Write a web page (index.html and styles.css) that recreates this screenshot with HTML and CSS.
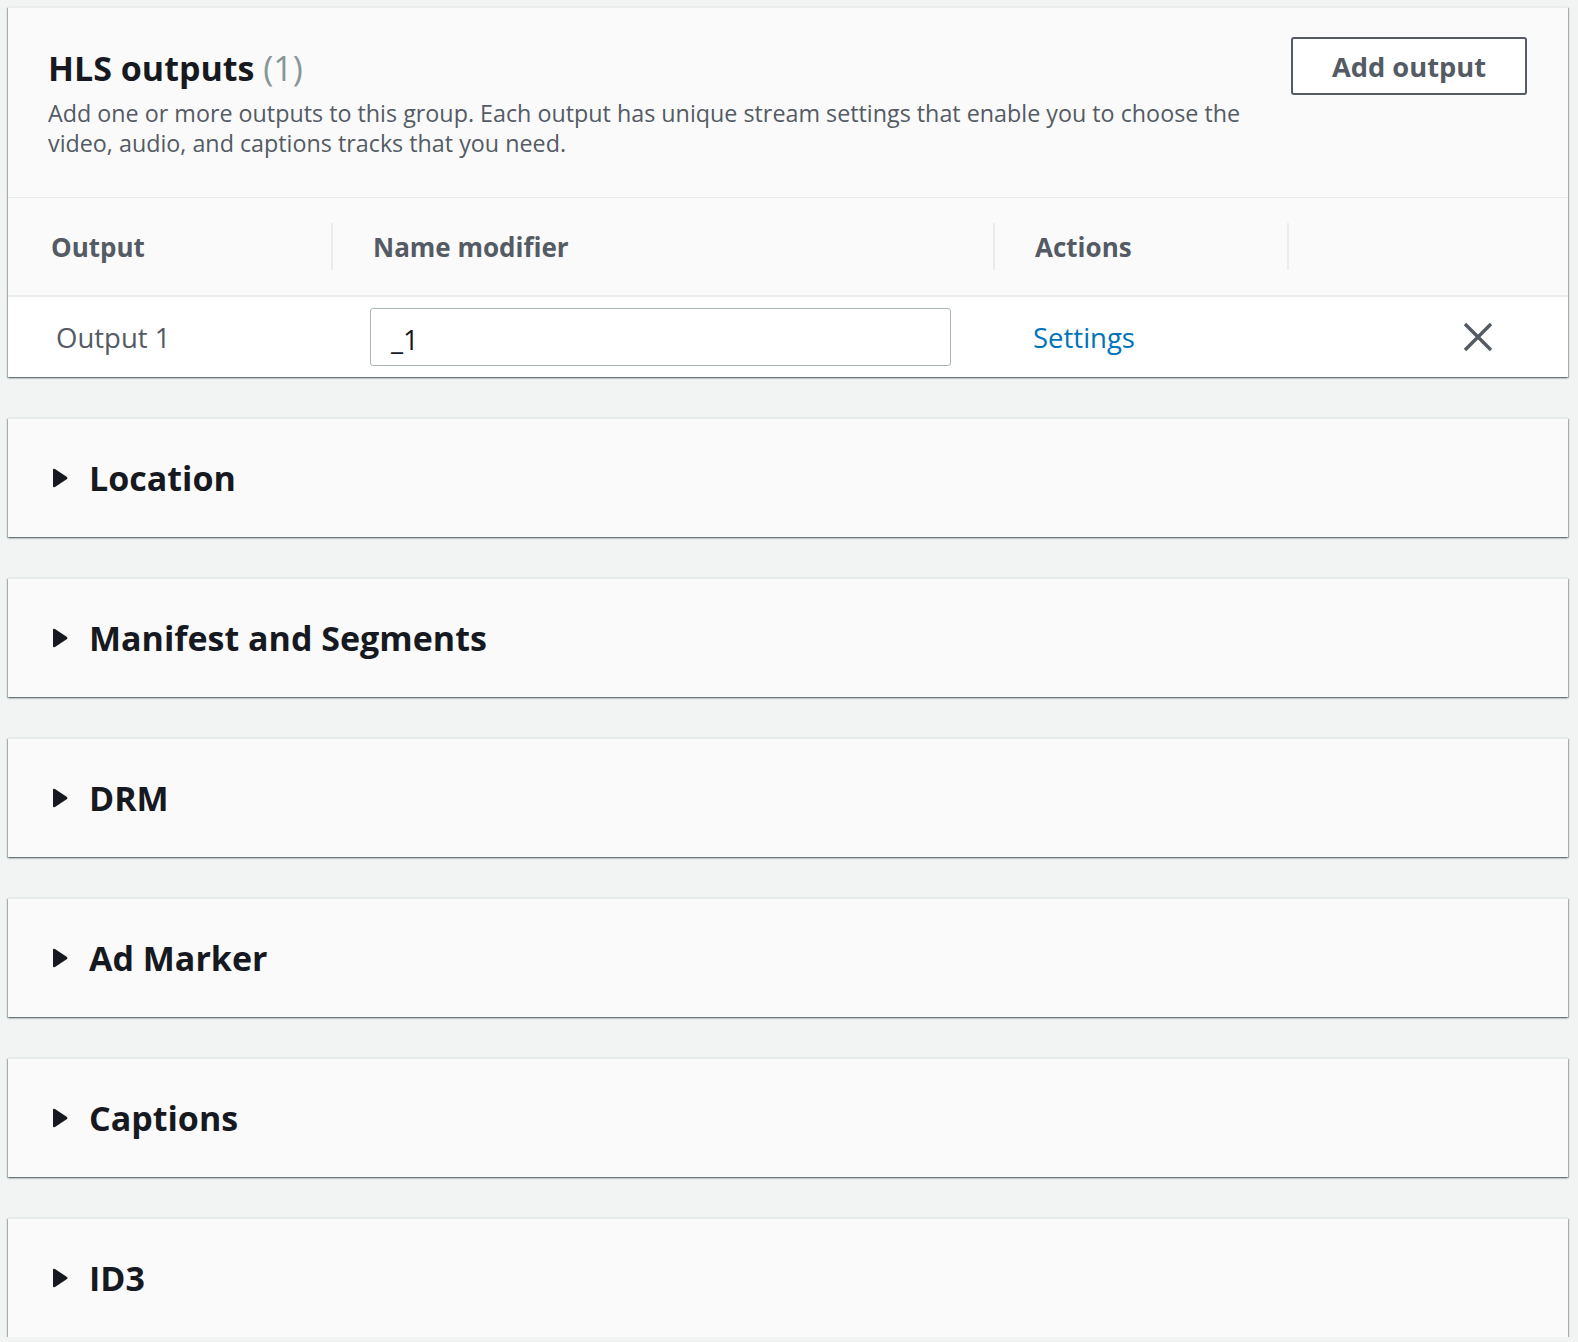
FILE: index.html
```html
<!DOCTYPE html>
<html lang="en">
<head>
<meta charset="utf-8">
<title>HLS outputs</title>
<link rel="stylesheet" href="styles.css">
</head>
<body>
<div class="page">
  <section class="card outputs">
    <div class="outputs-head">
      <div class="head-text">
        <h2 class="title">HLS outputs <span class="count">(1)</span></h2>
        <p class="desc">Add one or more outputs to this group. Each output has unique stream settings that enable you to choose the video, audio, and captions tracks that you need.</p>
      </div>
      <button class="btn">Add output</button>
    </div>
    <div class="table">
      <div class="row thead">
        <div class="cell c1"><span>Output</span></div>
        <div class="cell c2"><span>Name modifier</span></div>
        <div class="cell c3"><span>Actions</span></div>
        <div class="cell c4"></div>
      </div>
      <div class="row tbody">
        <div class="cell c1 name">Output 1</div>
        <div class="cell c2"><div class="input">_1</div></div>
        <div class="cell c3"><a class="link" href="#">Settings</a></div>
        <div class="cell c4 remove">
          <svg width="30" height="30" viewBox="0 0 30 30" aria-hidden="true"><path d="M2 2 L28 28 M28 2 L2 28" stroke="#545b64" stroke-width="3.4" fill="none"/></svg>
        </div>
      </div>
    </div>
  </section>

  <section class="card exp"><svg class="caret" width="16" height="20" viewBox="0 0 16 20"><path d="M1 2 Q1 0 3 1 L15 9 Q16 10 15 11 L3 19 Q1 20 1 18 Z" fill="#16191f"/></svg><h3 class="exp-title">Location</h3></section>
  <section class="card exp"><svg class="caret" width="16" height="20" viewBox="0 0 16 20"><path d="M1 2 Q1 0 3 1 L15 9 Q16 10 15 11 L3 19 Q1 20 1 18 Z" fill="#16191f"/></svg><h3 class="exp-title">Manifest and Segments</h3></section>
  <section class="card exp"><svg class="caret" width="16" height="20" viewBox="0 0 16 20"><path d="M1 2 Q1 0 3 1 L15 9 Q16 10 15 11 L3 19 Q1 20 1 18 Z" fill="#16191f"/></svg><h3 class="exp-title">DRM</h3></section>
  <section class="card exp"><svg class="caret" width="16" height="20" viewBox="0 0 16 20"><path d="M1 2 Q1 0 3 1 L15 9 Q16 10 15 11 L3 19 Q1 20 1 18 Z" fill="#16191f"/></svg><h3 class="exp-title">Ad Marker</h3></section>
  <section class="card exp"><svg class="caret" width="16" height="20" viewBox="0 0 16 20"><path d="M1 2 Q1 0 3 1 L15 9 Q16 10 15 11 L3 19 Q1 20 1 18 Z" fill="#16191f"/></svg><h3 class="exp-title">Captions</h3></section>
  <section class="card exp"><svg class="caret" width="16" height="20" viewBox="0 0 16 20"><path d="M1 2 Q1 0 3 1 L15 9 Q16 10 15 11 L3 19 Q1 20 1 18 Z" fill="#16191f"/></svg><h3 class="exp-title">ID3</h3></section>
</div>
</body>
</html>
```

FILE: styles.css
```css
* { box-sizing: border-box; }
html, body { margin: 0; }
body {
  background: #f2f3f3;
  font-family: "Open Sans", "Noto Sans", "Liberation Sans", sans-serif;
  color: #545b64;
  padding: 7px 10px 0 8px;
}
.page {
  display: flex;
  flex-direction: column;
  gap: 41px;
}
.card {
  background: #fafafa;
  border-top: 1px solid #eaeded;
  box-shadow: 0 1px 2px 0 rgba(0, 28, 36, 0.45), 1px 1px 1px 0 rgba(0, 28, 36, 0.2), -1px 1px 1px 0 rgba(0, 28, 36, 0.2);
}
.outputs-head {
  height: 189px;
  display: flex;
  justify-content: space-between;
  gap: 40px;
  padding: 29px 41px 0 40px;
}
.head-text { flex: 1; }
.title {
  margin: 11px 0 0 0;
  font-size: 34px;
  line-height: 40px;
  font-weight: 700;
  color: #16191f;
}
.count {
  font-weight: 400;
  color: #879596;
}
.desc {
  margin: 10px 0 0 0;
  font-size: 23.3px;
  line-height: 30px;
  color: #545b64;
}
.btn {
  flex: none;
  width: 236px;
  height: 58px;
  border: 2px solid #545b64;
  border-radius: 3px;
  background: #fff;
  color: #545b64;
  font-family: inherit;
  font-size: 27.3px;
  font-weight: 700;
  padding: 0;
}
.row {
  display: grid;
  grid-template-columns: 323px 662px 294px 1fr;
  align-items: center;
}
.thead {
  height: 98px;
  border-top: 1px solid #eaeded;
  font-size: 26px;
  font-weight: 700;
  color: #545b64;
}
.thead .cell {
  height: 47px;
  display: flex;
  align-items: center;
  padding-left: 40px;
}
.thead .c1 { padding-left: 43px; }
.thead .c2, .thead .c3, .thead .c4 { border-left: 2px solid #eaeded; }
.tbody {
  height: 82px;
  background: #fff;
  border-top: 2px solid #eaeded;
  font-size: 27.5px;
}
.tbody .name { padding-left: 48px; color: #545b64; }
.tbody .c2 { padding-left: 39px; }
.input {
  width: 581px;
  height: 58px;
  border: 1px solid #aab7b8;
  border-radius: 3px;
  background: #fff;
  color: #16191f;
  padding: 4px 20px 0;
  display: flex;
  align-items: center;
}
.tbody .c3 { padding-left: 40px; }
.link {
  color: #0073bb;
  text-decoration: none;
}
.remove {
  display: flex;
  justify-content: flex-end;
  padding-right: 75px;
}
.remove svg { display: block; }
.exp {
  height: 119px;
  display: flex;
  align-items: center;
  padding-left: 44px;
}
.caret { display: block; flex: none; }
.exp-title {
  margin: 0 0 0 21px;
  font-size: 34px;
  line-height: 40px;
  font-weight: 700;
  color: #16191f;
}
```
